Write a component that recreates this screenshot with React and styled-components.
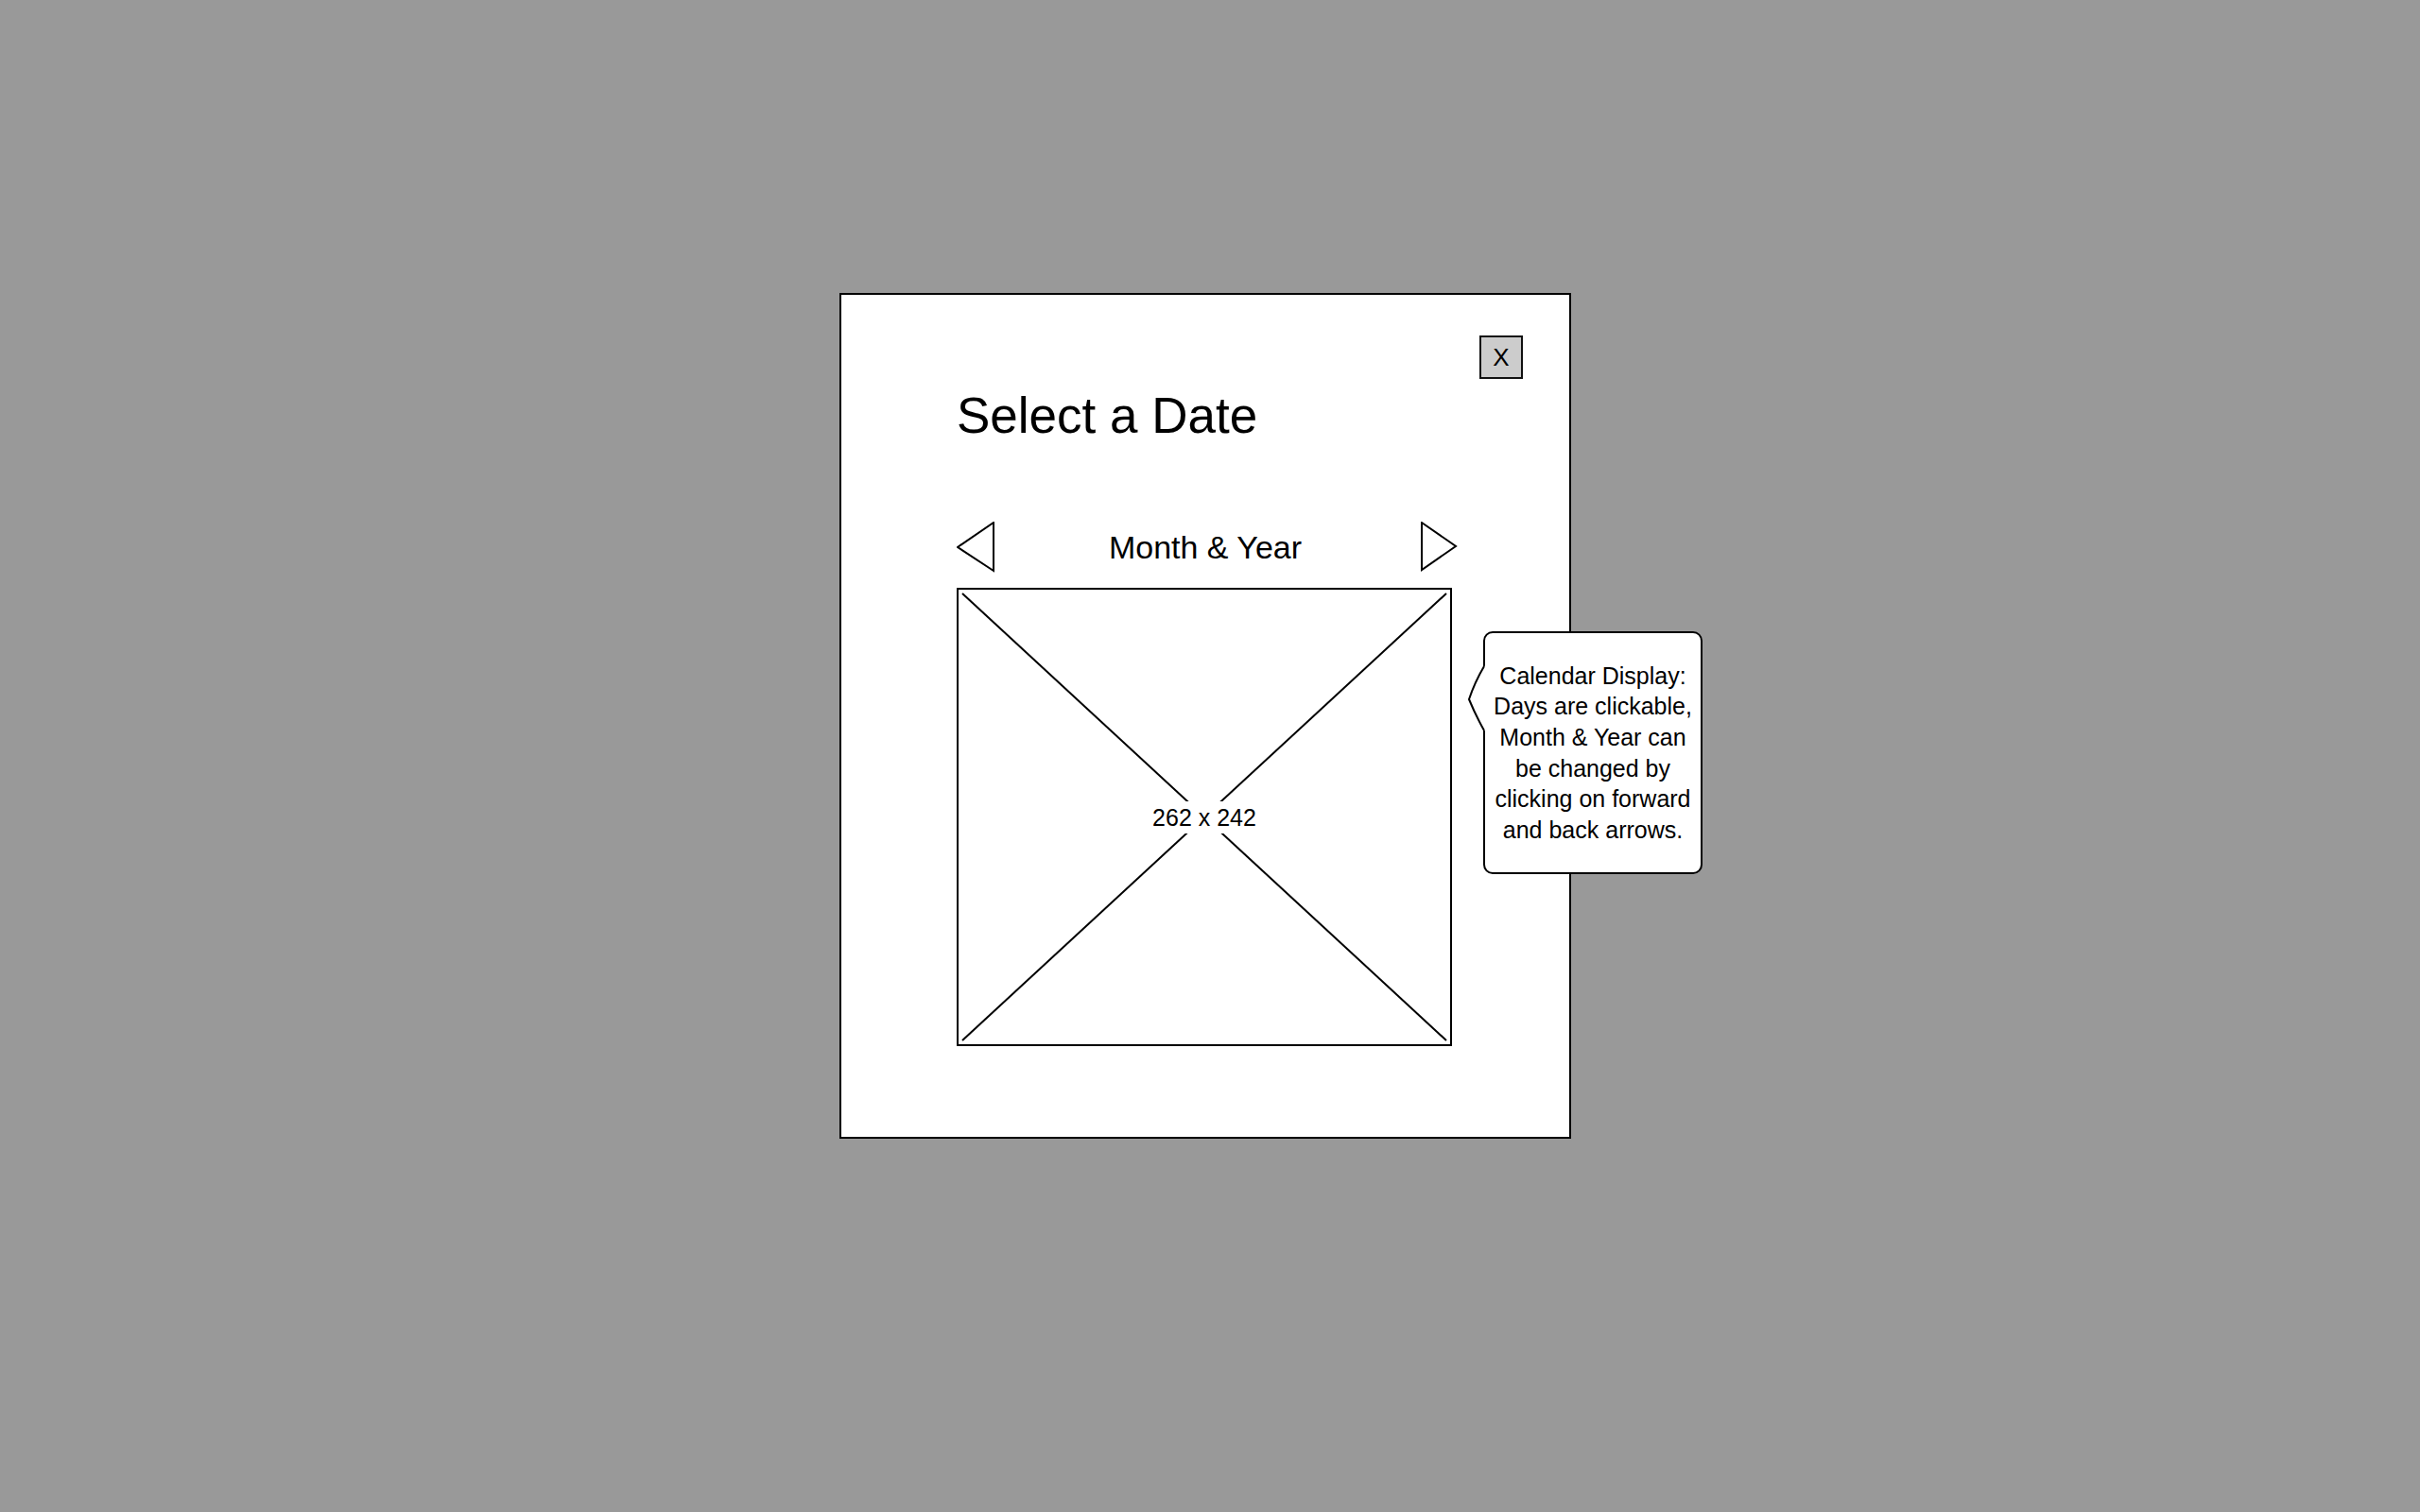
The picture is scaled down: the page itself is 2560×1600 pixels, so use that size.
import React from 'react';
import styled, { createGlobalStyle } from 'styled-components';

const GlobalStyle = createGlobalStyle`
  html, body {
    margin: 0;
    padding: 0;
    background: #999999;
  }
  body {
    font-family: "Comic Sans MS", "Liberation Sans", Arial, sans-serif;
    color: #000;
  }
  #root {
    min-height: 100vh;
  }
`;

const Page = styled.div`
  min-height: 1600px;
  box-sizing: border-box;
  padding: 310px 0 0 888px;
`;

const Dialog = styled.section`
  position: relative;
  width: 774px;
  height: 895px;
  box-sizing: border-box;
  background: #ffffff;
  border: 2px solid #000;
  display: flex;
  flex-direction: column;
  align-items: flex-start;
  padding: 43px 49px 0 122px;
`;

const CloseButton = styled.button`
  align-self: flex-end;
  width: 46px;
  height: 46px;
  box-sizing: border-box;
  margin: 0;
  padding: 0;
  border: 2px solid #111;
  background: #cccccc;
  color: #000;
  font-family: inherit;
  font-size: 26px;
  line-height: 1;
  display: flex;
  align-items: center;
  justify-content: center;
`;

const Title = styled.h1`
  margin: 9px 0 0 0;
  font-size: 53px;
  line-height: 60px;
  font-weight: normal;
  letter-spacing: 0;
`;

const NavRow = styled.div`
  margin-top: 82px;
  width: 530px;
  height: 54px;
  display: flex;
  align-items: center;
  justify-content: space-between;
`;

const NavLabel = styled.div`
  font-size: 34px;
  line-height: 38px;
  margin-right: 4px;
`;

const ArrowSvg = styled.svg`
  display: block;
  flex: none;
`;

const Placeholder = styled.div`
  margin-top: 16px;
  width: 524px;
  height: 485px;
  box-sizing: border-box;
  border: 2px solid #000;
  display: grid;
  & > * {
    grid-area: 1 / 1;
  }
`;

const CrossSvg = styled.svg`
  display: block;
  width: 100%;
  height: 100%;
`;

const SizeLabel = styled.span`
  place-self: center;
  background: #fff;
  padding: 3px 4px;
  font-size: 25px;
  line-height: 28px;
`;

const Callout = styled.aside`
  position: absolute;
  left: 679px;
  top: 356px;
  width: 232px;
  height: 257px;
  box-sizing: border-box;
  border: 2px solid #000;
  border-radius: 10px;
  background: #fff;
  display: flex;
  align-items: center;
  justify-content: center;
  text-align: center;
  font-size: 25px;
  line-height: 32.6px;
  white-space: nowrap;
`;

const Pointer = styled.svg`
  position: absolute;
  left: -18px;
  top: 30px;
  overflow: visible;
`;

const LeftArrow = () => (
  <ArrowSvg width="40" height="54" viewBox="0 0 40 54">
    <polygon points="1,27 39,1 39,52" fill="#fff" stroke="#000" strokeWidth="2" strokeLinejoin="miter" />
  </ArrowSvg>
);

const RightArrow = () => (
  <ArrowSvg width="40" height="54" viewBox="0 0 40 54">
    <polygon points="2,1 38,26 2,51" fill="#fff" stroke="#000" strokeWidth="2" strokeLinejoin="miter" />
  </ArrowSvg>
);

export default function App() {
  return (
    <>
      <GlobalStyle />
      <Page>
        <Dialog>
          <CloseButton type="button">X</CloseButton>
          <Title>Select a Date</Title>
          <NavRow>
            <LeftArrow />
            <NavLabel>Month &amp; Year</NavLabel>
            <RightArrow />
          </NavRow>
          <Placeholder>
            <CrossSvg viewBox="0 0 520 481" preserveAspectRatio="none">
              <line x1="4" y1="4" x2="516" y2="477" stroke="#000" strokeWidth="2" />
              <line x1="516" y1="4" x2="4" y2="477" stroke="#000" strokeWidth="2" />
            </CrossSvg>
            <SizeLabel>262 x 242</SizeLabel>
          </Placeholder>
          <Callout>
            <Pointer width="22" height="80" viewBox="0 0 22 80">
              <path d="M22 3 L17 5 Q7 22 1 40 Q8 57 17 73 L22 75 Z" fill="#fff" />
              <path d="M17 5 Q7 22 1 40 Q8 57 17 73" fill="none" stroke="#000" strokeWidth="2" />
            </Pointer>
            <div>
              Calendar Display:
              <br />
              Days are clickable,
              <br />
              Month &amp; Year can
              <br />
              be changed by
              <br />
              clicking on forward
              <br />
              and back arrows.
            </div>
          </Callout>
        </Dialog>
      </Page>
    </>
  );
}
